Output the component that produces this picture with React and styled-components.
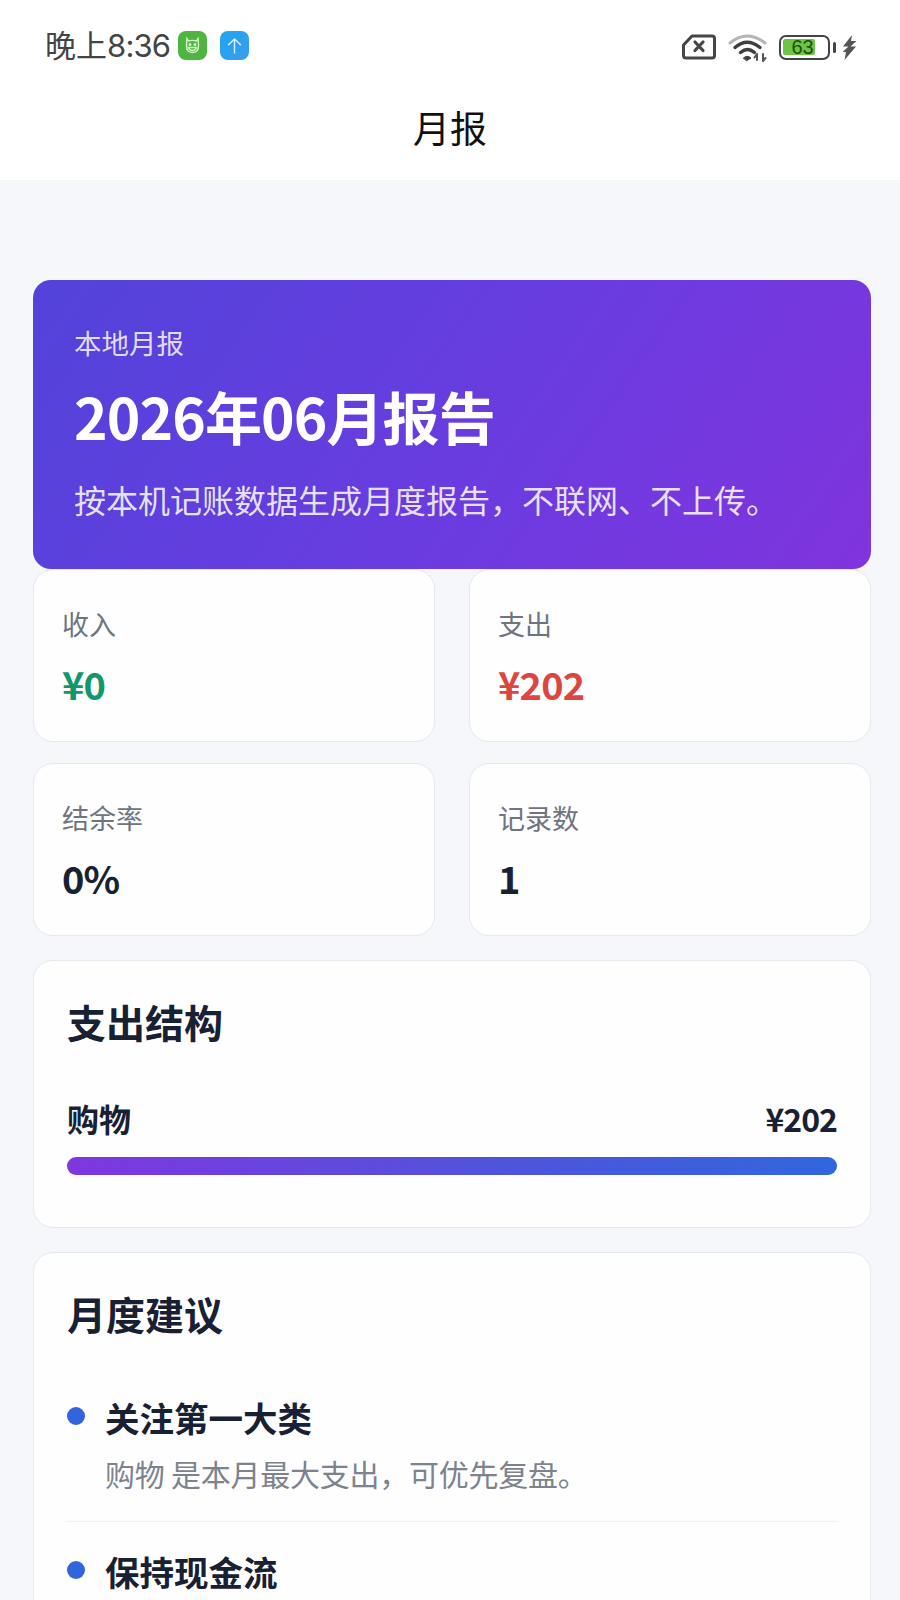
import React from "react";
import styled, { createGlobalStyle } from "styled-components";

const Global = createGlobalStyle`
  html, body { margin: 0; padding: 0; height: 1600px; overflow: hidden; background: #f5f7fb; }
  body { font-family: "Noto Sans CJK SC", "Noto Sans", sans-serif; }
  * { box-sizing: border-box; }
`;

const Page = styled.div`
  width: 900px;
  height: 1600px;
  overflow: hidden;
  background: #f5f7fb;
`;

const Top = styled.header`
  height: 180px;
  background: #fff;
  display: flex;
  flex-direction: column;
`;

const StatusBar = styled.div`
  height: 90px;
  padding: 30px 43px 0 45px;
  display: flex;
  align-items: flex-start;
  justify-content: space-between;
`;

const StatusLeft = styled.div`
  display: flex;
  align-items: center;
  height: 30px;
`;

const Time = styled.span`
  font-family: "Noto Sans CJK SC", sans-serif;
  font-size: 31px;
  line-height: 30px;
  color: #444;
  margin-right: 8px;
  margin-top: -1px;
`;

const Digits = styled.span`
  font-family: Inter, sans-serif;
  letter-spacing: -0.8px;
`;

const AppIcon = styled.span`
  width: 29px;
  height: 29px;
  border-radius: 8px;
  background: ${(p) => p.$bg};
  display: flex;
  align-items: center;
  justify-content: center;
  margin-right: ${(p) => p.$gap || 0}px;
`;

const StatusRight = styled.div`
  display: flex;
  align-items: center;
  height: 30px;
  margin-top: 2px;
`;

const NavTitle = styled.h1`
  margin: 0;
  height: 90px;
  padding-bottom: 17px;
  display: flex;
  align-items: center;
  justify-content: center;
  font-size: 37px;
  font-weight: 400;
  color: #111;
`;

const Content = styled.main`
  padding: 100px 29px 0 33px;
`;

const Hero = styled.section`
  height: 289px;
  border-radius: 18px;
  padding: 42px 41px 0;
  color: #fff;
  background: linear-gradient(125deg, #5243da 0%, #6a3ce0 55%, #8034dd 100%);
`;

const HeroLabel = styled.div`
  font-size: 27.5px;
  line-height: 40px;
  color: rgba(255, 255, 255, 0.82);
`;

const HeroTitle = styled.h2`
  margin: 15px 0 0;
  font-size: 57px;
  line-height: 76px;
  font-weight: 700;
  letter-spacing: -0.9px;
`;

const HeroText = styled.p`
  margin: 23px 0 0;
  font-size: 32px;
  line-height: 46px;
  color: rgba(255, 255, 255, 0.85);
  white-space: nowrap;
`;

const StatGrid = styled.div`
  display: grid;
  grid-template-columns: 1fr 1fr;
  column-gap: 34px;
  row-gap: 21px;
`;

const Card = styled.div`
  background: #fefefe;
  border: 1.5px solid #e4e8ef;
  border-radius: 20px;
`;

const StatCard = styled(Card)`
  height: 173px;
  padding: 34px 28px 0;
`;

const StatLabel = styled.div`
  font-size: 27px;
  line-height: 40px;
  color: #6e7480;
`;

const StatValue = styled.div`
  margin-top: 12px;
  font-size: 38px;
  line-height: 56px;
  font-weight: 700;
  letter-spacing: -0.8px;
  color: ${(p) => p.$color};
`;

const Panel = styled(Card)`
  margin-top: 24px;
  padding: 30px 33px 0;
  height: ${(p) => p.$h}px;
`;

const PanelTitle = styled.h3`
  margin: 0;
  font-size: 39px;
  line-height: 60px;
  font-weight: 700;
  color: #182033;
`;

const BarRow = styled.div`
  margin-top: 44px;
  display: flex;
  justify-content: space-between;
  font-size: 32px;
  line-height: 46px;
  font-weight: 600;
  color: #182033;
`;

const Amount = styled.span`
  letter-spacing: -1px;
`;

const Track = styled.div`
  margin-top: 16px;
  height: 18px;
  border-radius: 9px;
  background: linear-gradient(90deg, #7f37df 0%, #4c55dc 60%, #3166de 100%);
`;

const Tip = styled.div`
  display: grid;
  grid-template-columns: 18px 1fr;
  column-gap: 20px;
  padding: ${(p) => (p.$first ? "49px 0 25px" : "24px 0 0")};
  border-bottom: ${(p) => (p.$first ? "1px solid #eef0f4" : "none")};
`;

const Dot = styled.span`
  width: 18px;
  height: 18px;
  margin-top: 15px;
  border-radius: 50%;
  background: #3264de;
`;

const TipTitle = styled.div`
  font-size: 34.5px;
  line-height: 50px;
  font-weight: 700;
  color: #182033;
`;

const TipText = styled.div`
  margin-top: 8px;
  font-size: 30px;
  line-height: 46px;
  letter-spacing: -0.25px;
  color: #7d838e;
  white-space: nowrap;
`;

const PetIcon = () => (
  <svg width="19" height="19" viewBox="0 0 19 19" fill="none" stroke="#d8f5c8" strokeWidth="1.4" strokeLinecap="round">
    <path d="M4 2.5 L5.5 5 Q9.5 3.8 13.5 5 L15 2.5 L15.5 9 Q16 16.5 9.5 16.5 Q3 16.5 3.5 9 Z" />
    <circle cx="7" cy="8.5" r=".8" fill="#d8f5c8" />
    <circle cx="12" cy="8.5" r=".8" fill="#d8f5c8" />
    <path d="M5.5 11.5 H13.5 Q12.5 14.5 9.5 14.5 Q6.5 14.5 5.5 11.5 Z" />
  </svg>
);

const UpIcon = () => (
  <svg width="19" height="19" viewBox="0 0 19 19" fill="none" stroke="#d9f1ff" strokeWidth="1.4" strokeLinecap="round" strokeLinejoin="round">
    <path d="M9.5 17 V3 M3.5 8.8 L9.5 3 L15.5 8.8" />
  </svg>
);

const SimIcon = () => (
  <svg width="34" height="26" viewBox="0 0 34 26" fill="none" stroke="#454545" strokeWidth="3" strokeLinejoin="round" strokeLinecap="round" style={{ marginRight: 12 }}>
    <path d="M10 2 H30 Q32.500 2 32.500 4.500 V21.500 Q32.500 24 30 24 H4 Q1.500 24 1.500 21.500 V11 Z" />
    <path d="M13 8 L21 16.500 M21 8 L13 16.500" strokeWidth="3.2" />
  </svg>
);

const WifiIcon = () => (
  <svg width="40" height="29" viewBox="0 0 40 29" fill="none" strokeLinecap="round" style={{ marginRight: 11 }}>
    <path d="M2 10 Q19 -4 37 10" stroke="#b5b5b5" strokeWidth="3" />
    <path d="M7 14.500 Q19 4 32 14.500" stroke="#3f3f3f" strokeWidth="3.400" />
    <path d="M12.500 19.500 Q19.500 13.500 26.500 19.500" stroke="#3f3f3f" strokeWidth="3.400" />
    <path d="M15.500 25 Q19 21.500 23 25 L19 27.500 Z" fill="#3f3f3f" stroke="#3f3f3f" strokeWidth="1" />
    <path d="M29 21 V27 M26.500 24.500 L29 21 M35 28 V21 M35 28 L37.500 25" stroke="#555" strokeWidth="2" />
  </svg>
);

const Battery = styled.span`
  position: relative;
  width: 51px;
  height: 25px;
  border: 2.5px solid #444;
  border-radius: 7px;
  padding: 2.5px;
  display: flex;
  align-items: stretch;
`;

const BatteryFill = styled.span`
  width: 32px;
  background: #6cc644;
  border-radius: 2px;
`;

const BatteryText = styled.span`
  position: absolute;
  left: 11px;
  top: -4px;
  font-family: "Liberation Sans", sans-serif;
  font-size: 20px;
  line-height: 28px;
  color: #1f4d12;
`;

const BatteryNub = styled.span`
  width: 3.500px;
  height: 11px;
  margin-left: 3px;
  background: #444;
  border-radius: 2px;
`;

const BoltIcon = () => (
  <svg width="15" height="25" viewBox="0 0 15 25" fill="#555" style={{ marginLeft: 6 }}>
    <path d="M10 0 L1 11.500 L6.500 11.500 L0.500 17 L4 17 L2.500 25 L14 11.500 L8.500 11.500 L14.500 6 L9 6 Z" />
  </svg>
);

export default function App() {
  return (
    <Page>
      <Global />
      <Top>
        <StatusBar>
          <StatusLeft>
            <Time>晚上<Digits>8:36</Digits></Time>
            <AppIcon $bg="#4eb540" $gap={13}><PetIcon /></AppIcon>
            <AppIcon $bg="linear-gradient(135deg,#1fa6ee,#3b9cf0)"><UpIcon /></AppIcon>
          </StatusLeft>
          <StatusRight>
            <SimIcon />
            <WifiIcon />
            <Battery>
              <BatteryFill />
              <BatteryText>63</BatteryText>
            </Battery>
            <BatteryNub />
            <BoltIcon />
          </StatusRight>
        </StatusBar>
        <NavTitle>月报</NavTitle>
      </Top>
      <Content>
        <Hero>
          <HeroLabel>本地月报</HeroLabel>
          <HeroTitle>2026年06月报告</HeroTitle>
          <HeroText>按本机记账数据生成月度报告，不联网、不上传。</HeroText>
        </Hero>
        <StatGrid>
          <StatCard>
            <StatLabel>收入</StatLabel>
            <StatValue $color="#12966b">¥0</StatValue>
          </StatCard>
          <StatCard>
            <StatLabel>支出</StatLabel>
            <StatValue $color="#dc4640">¥202</StatValue>
          </StatCard>
          <StatCard>
            <StatLabel>结余率</StatLabel>
            <StatValue $color="#182033">0%</StatValue>
          </StatCard>
          <StatCard>
            <StatLabel>记录数</StatLabel>
            <StatValue $color="#182033">1</StatValue>
          </StatCard>
        </StatGrid>
        <Panel $h={268}>
          <PanelTitle>支出结构</PanelTitle>
          <BarRow>
            <span>购物</span>
            <Amount>¥202</Amount>
          </BarRow>
          <Track />
        </Panel>
        <Panel $h={420}>
          <PanelTitle>月度建议</PanelTitle>
          <Tip $first>
            <Dot />
            <div>
              <TipTitle>关注第一大类</TipTitle>
              <TipText>购物 是本月最大支出，可优先复盘。</TipText>
            </div>
          </Tip>
          <Tip>
            <Dot />
            <div>
              <TipTitle>保持现金流</TipTitle>
            </div>
          </Tip>
        </Panel>
      </Content>
    </Page>
  );
}
